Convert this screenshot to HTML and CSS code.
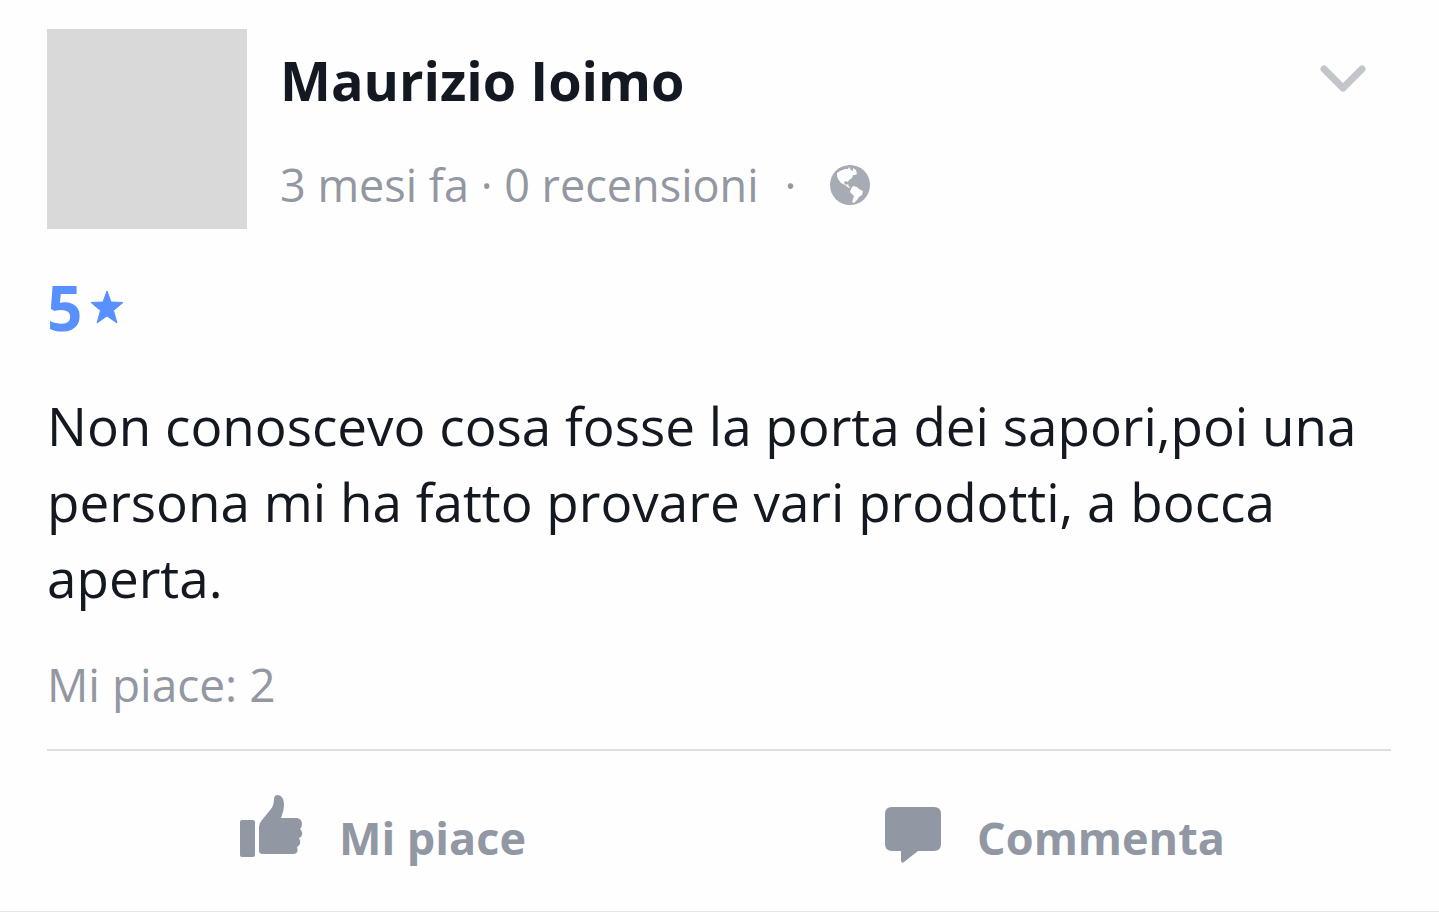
FILE: index.html
```html
<!DOCTYPE html>
<html lang="it">

<head>
    <meta charset="UTF-8">
    <meta name="viewport" content="width=device-width, initial-scale=1.0">
    <title>Recensione</title>
    <link rel="stylesheet" href="styles.css">
</head>

<body>
    <article class="review">
        <header class="review-header">
            <div class="avatar"></div>
            <div class="author">
                <h1 class="author-name">Maurizio Ioimo</h1>
                <p class="meta">
                    <span>3 mesi fa · 0 recensioni</span>
                    <span class="dot">·</span>
                    <svg class="globe" viewBox="0 0 40 40" role="img" aria-label="Pubblica">
                        <circle cx="20" cy="20" r="20" />
                        <path class="land" d="M7 8L10 6L15 4L18 4L19 2L21 5L23 6L23 3L26 5L27 9L25 10L23 10L22 13L19 15L18 17L15 16L14 18L16 20L18 19L19 22L21 23L19 23L15 20L11 18L8 14L7 11Z" />
                        <path class="land" d="M21 24L23 21L27 22L29 24L33 26L32 30L29 32L27 35L24 38L22 37L24 31L20 27Z" />
                    </svg>
                </p>
            </div>
            <button class="menu-btn" aria-label="Altro">
                <svg viewBox="0 0 46 28">
                    <path d="M4 4L23 23L42 4" />
                </svg>
            </button>
        </header>

        <p class="rating">5
            <svg viewBox="0 0 34 34" aria-hidden="true">
                <path d="M17 1L21 12L33 12.500L23.500 20.500L27 33L17 26L7 33L10.500 20.500L1 12.500L13 12Z" />
            </svg>
        </p>

        <p class="review-text">Non conoscevo cosa fosse la porta dei sapori,poi una persona mi ha fatto provare vari prodotti, a bocca aperta.</p>
        <p class="likes">Mi piace: 2</p>

        <footer class="actions">
            <button class="action">
                <svg class="thumb" viewBox="0 0 63 62" aria-hidden="true">
                    <rect x="0" y="25" width="15" height="37" rx="2" />
                    <path d="M19 32Q19 28 22 25L31 14Q34 10 34 4Q34 0 38 0Q44 1 44 10Q44 16 41 23H57Q62 24 62 29Q62 32 60 34Q63 37 62 40Q61 43 59 43Q61 46 60 49Q59 51 57 52Q59 58 54 59H23Q19 59 19 56Z" />
                </svg>
                <span class="action-label">Mi piace</span>
            </button>
            <button class="action">
                <svg class="bubble" viewBox="0 0 56 56" aria-hidden="true">
                    <path d="M7 0H49Q56 0 56 7V37Q56 44 49 44H33L19 55Q16 57 16 53V44H7Q0 44 0 37V7Q0 0 7 0Z" />
                </svg>
                <span class="action-label">Commenta</span>
            </button>
        </footer>
    </article>
</body>

</html>
```
FILE: styles.css
```css
* {
    box-sizing: border-box;
    margin: 0;
    padding: 0;
}

body {
    font-family: "Open Sans", "Noto Sans", sans-serif;
    background-color: #fefefe;
    color: #141821;
}

button {
    font-family: inherit;
    background: none;
    border: none;
    cursor: pointer;
}

.review {
    padding: 29px 48px 0 47px;
    border-bottom: 2px solid #e5e6e8;
}

.review-header {
    display: flex;
    align-items: flex-start;
    gap: 33px;
}

.avatar {
    width: 200px;
    height: 200px;
    background-color: #d9d9d9;
}

.author {
    flex: 1;
    padding-top: 13px;
}

.author-name {
    font-size: 54px;
    line-height: 76px;
}

.meta {
    display: flex;
    align-items: center;
    margin-top: 35px;
    font-size: 45px;
    line-height: 64px;
    color: #9297a1;
}

.dot {
    margin: 0 34px 0 26px;
}

.globe {
    width: 40px;
    height: 40px;
    fill: #a7abb4;
}

.globe .land {
    fill: #fefefe;
}

.menu-btn {
    margin: 36px 25px 0 0;
}

.menu-btn svg {
    display: block;
    width: 46px;
    height: 28px;
    fill: none;
    stroke: #c2c5ca;
    stroke-width: 7;
    stroke-linecap: round;
    stroke-linejoin: round;
}

.rating {
    display: flex;
    align-items: center;
    gap: 8px;
    margin-top: 40px;
    font-size: 62px;
    font-weight: bold;
    line-height: 76px;
    color: #5890ff;
}

.rating svg {
    width: 34px;
    height: 34px;
    fill: #5890ff;
    stroke: #5890ff;
    stroke-linejoin: round;
}

.review-text {
    margin-top: 43px;
    font-size: 53px;
    line-height: 76px;
}

.likes {
    margin-top: 36px;
    padding-bottom: 33px;
    font-size: 46px;
    line-height: 64px;
    color: #9297a1;
    border-bottom: 2px solid #dddfe2;
}

.actions {
    display: flex;
}

.action {
    flex: 1;
    display: flex;
    align-items: center;
    justify-content: center;
    gap: 36px;
    height: 160px;
    font-size: 45px;
    font-weight: bold;
    color: #9197a3;
}

.action svg {
    fill: #9197a3;
}

.action-label {
    padding-top: 12px;
}

.thumb {
    width: 63px;
    height: 62px;
    margin-bottom: 10px;
}

.bubble {
    width: 56px;
    height: 56px;
    margin-top: 8px;
}
```
